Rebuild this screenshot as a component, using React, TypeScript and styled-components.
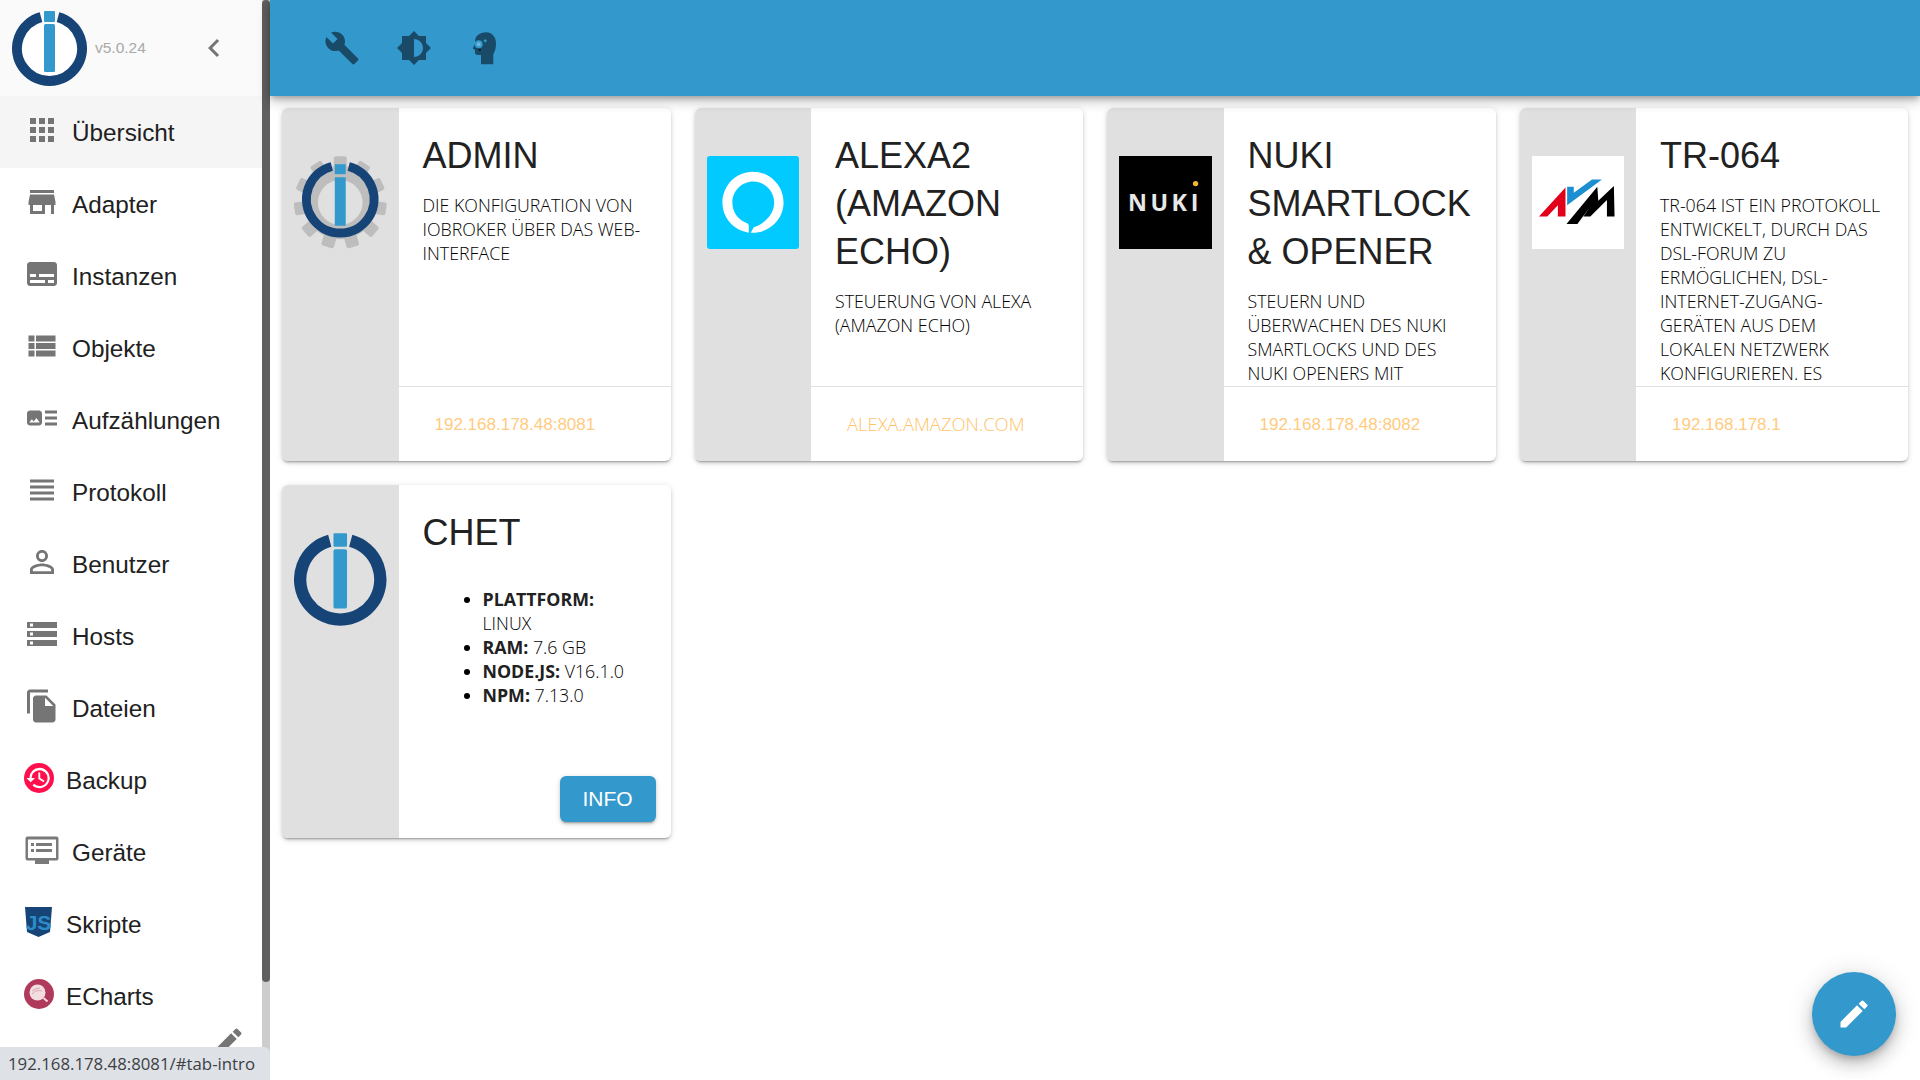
import React from 'react';
import styled, { createGlobalStyle } from 'styled-components';
import {
  MdApps, MdStore, MdSubtitles, MdViewList, MdArtTrack, MdViewHeadline, MdPersonOutline,
  MdStorage, MdFileCopy, MdEdit, MdChevronLeft, MdBuild, MdBrightnessMedium,
} from 'react-icons/md';

const GlobalStyle = createGlobalStyle`
  html, body { margin: 0; padding: 0; height: 100%; overflow: hidden; background: #fff; }
  * { box-sizing: border-box; }
`;

const SANS = `"Liberation Sans", Arial, sans-serif`;
const BODY = `"Open Sans", "Liberation Sans", sans-serif`;

const Page = styled.div`
  position: relative;
  width: 1920px;
  height: 1080px;
  display: flex;
  overflow: hidden;
  font-family: ${SANS};
  color: #212121;
`;

const Sidebar = styled.aside`
  width: 270px;
  height: 100%;
  display: flex;
  flex-shrink: 0;
  background: #fff;
`;

const SideColumn = styled.div`
  width: 262px;
  display: flex;
  flex-direction: column;
  overflow: hidden;
`;

const Scrollbar = styled.div`
  width: 8px;
  display: flex;
  flex-direction: column;
  background: #cdcdcd;
`;

const ScrollThumb = styled.div`
  height: 982px;
  background: #5f5f5f;
  border-radius: 4px;
`;

const Brand = styled.div`
  height: 96px;
  flex-shrink: 0;
  display: flex;
  align-items: center;
  padding-left: 12px;
  background: #fafafa;
`;

const Version = styled.span`
  font-size: 15.5px;
  color: #a9a9a9;
  margin-left: 8px;
  width: 101px;
`;

const Collapse = styled.span`
  display: flex;
  color: #757575;
`;

const MenuRow = styled.div<{ $active?: boolean }>`
  height: 72px;
  flex-shrink: 0;
  display: flex;
  align-items: center;
  padding-left: 24px;
  font-size: 24.3px;
  background: ${(p) => (p.$active ? '#f5f5f5' : 'transparent')};
`;

const MenuIcon = styled.span<{ $logo?: boolean }>`
  width: ${(p) => (p.$logo ? 30 : 36)}px;
  height: ${(p) => (p.$logo ? 30 : 36)}px;
  display: flex;
  align-items: center;
  justify-content: center;
  margin-bottom: 4px;
  color: #757575;
  flex-shrink: 0;
`;

const MenuLabel = styled.span`
  margin-left: 12px;
  padding-top: 2px;
`;

const EditRow = styled.div`
  display: flex;
  justify-content: flex-end;
  padding: 0 16px 0 0;
  margin-top: -8px;
  color: #757575;
`;

const StatusBar = styled.div`
  position: absolute;
  left: 0;
  bottom: 0;
  width: 270px;
  height: 33px;
  display: flex;
  align-items: center;
  padding-left: 8px;
  background: #dee1e6;
  border-top-right-radius: 6px;
  font-family: ${BODY};
  font-size: 16.8px;
  color: #3c4043;
  white-space: nowrap;
`;

const Main = styled.main`
  flex: 1;
  display: flex;
  flex-direction: column;
  min-width: 0;
`;

const Header = styled.header`
  height: 96px;
  flex-shrink: 0;
  display: flex;
  align-items: center;
  padding-left: 36px;
  background: #3399cc;
  box-shadow: 0 3px 6px -1px rgba(0, 0, 0, 0.25), 0 6px 12px rgba(0, 0, 0, 0.14), 0 1px 15px rgba(0, 0, 0, 0.12);
  position: relative;
  z-index: 1;
`;

const HeaderButton = styled.span`
  width: 72px;
  height: 60px;
  display: flex;
  align-items: center;
  justify-content: center;
  color: #194b69;
`;

const CardGrid = styled.section`
  display: grid;
  grid-template-columns: repeat(4, 1fr);
  grid-auto-rows: 353px;
  gap: 24px;
  padding: 12px;
`;

const Card = styled.article`
  display: flex;
  border-radius: 6px;
  overflow: hidden;
  background: #fff;
  box-shadow: 0 3px 1.5px -2px rgba(0, 0, 0, 0.2), 0 2px 3px rgba(0, 0, 0, 0.14), 0 1.5px 6px rgba(0, 0, 0, 0.12);
`;

const CardSide = styled.div`
  width: 116.5px;
  flex-shrink: 0;
  padding: 48px 12px 0;
  background: #e0e0e0;
`;

const CardLogo = styled.div<{ $bg?: string; $round?: number }>`
  width: 92.5px;
  height: 93px;
  display: flex;
  align-items: center;
  justify-content: center;
  background: ${(p) => p.$bg ?? 'transparent'};
  border-radius: ${(p) => p.$round ?? 0}px;
`;

const CardMain = styled.div`
  flex: 1;
  min-width: 0;
  display: flex;
  flex-direction: column;
`;

const CardBody = styled.div`
  flex: 1;
  min-height: 0;
  overflow: hidden;
  padding: 24px 24px 0;
`;

const CardTitle = styled.h2`
  margin: 0 0 12.5px;
  font-family: ${SANS};
  font-size: 36px;
  font-weight: 400;
  line-height: 48px;
  color: #212121;
  text-transform: uppercase;
`;

const CardText = styled.div`
  font-family: ${BODY};
  font-size: 17.8px;
  font-weight: 300;
  line-height: 24px;
  color: #000;
  text-transform: uppercase;
`;

const InfoList = styled.ul`
  margin: 30px 0 0;
  padding: 0 0 0 60px;
  font-family: ${BODY};
  font-size: 17.8px;
  font-weight: 300;
  line-height: 24px;
  color: #000;
  text-transform: uppercase;
  b { font-weight: 700; color: #212121; }
`;

const CardFooter = styled.div`
  height: 75px;
  flex-shrink: 0;
  display: flex;
  align-items: center;
  padding-left: 36px;
  border-top: 1.5px solid #e0e0e0;
`;

const CardLink = styled.span<{ $numeric?: boolean }>`
  font-family: ${(p) => (p.$numeric ? SANS : BODY)};
  font-size: ${(p) => (p.$numeric ? 17 : 18.4)}px;
  font-weight: ${(p) => (p.$numeric ? 400 : 300)};
  padding: ${(p) => (p.$numeric ? '2px 0 0' : '0 0 2px')};
  color: ${(p) => (p.$numeric ? '#ffcb80' : '#ffc266')};
  text-transform: uppercase;
`;

const ActionRow = styled.div`
  display: flex;
  justify-content: flex-end;
  padding: 0 15px 16px 0;
`;

const InfoButton = styled.button`
  width: 96px;
  height: 46px;
  border: 0;
  border-radius: 6px;
  background: #3399cc;
  color: #fff;
  font-family: ${SANS};
  font-size: 21px;
  box-shadow: 0 3px 1.5px -2px rgba(0, 0, 0, 0.2), 0 2px 3px rgba(0, 0, 0, 0.14), 0 1.5px 6px rgba(0, 0, 0, 0.12);
`;

const Fab = styled.button`
  position: absolute;
  left: 1812px;
  top: 972px;
  width: 84px;
  height: 84px;
  display: flex;
  align-items: center;
  justify-content: center;
  border: 0;
  border-radius: 50%;
  background: #3399cc;
  color: #fff;
  box-shadow: 0 4.5px 7.5px -1.5px rgba(0, 0, 0, 0.2), 0 9px 15px 1px rgba(0, 0, 0, 0.14), 0 3px 27px 1.5px rgba(0, 0, 0, 0.12);
`;

const NAVY = '#164477';
const BLUE = '#3399cc';

const IoLogo = ({ size, fill }: { size: number; fill?: string }) => (
  <svg width={size} height={size} viewBox="0 0 75 75">
    {fill && <circle cx="37.5" cy="37.5" r="30" fill={fill} />}
    <path d="M46 6.1 A32.5 32.5 0 1 1 29 6.1" fill="none" stroke={NAVY} strokeWidth="10" />
    <rect x="32" y="0" width="11" height="11" rx="1" fill={BLUE} />
    <rect x="32" y="13" width="11" height="48" rx="1.5" fill={BLUE} />
  </svg>
);

const teeth = [0, 1, 2, 3, 4, 5, 6, 7, 8, 9, 10];

const GearLogo = () => (
  <svg width="93" height="93" viewBox="0 0 93 93">
    {teeth.map((t) => (
      <rect key={t} x="40" y="0" width="13" height="14" rx="2" fill="#bdbdbd" transform={`rotate(${(t * 360) / 11} 46.5 46.5)`} />
    ))}
    <circle cx="46.5" cy="46.5" r="37" fill="#bdbdbd" />
    <circle cx="46.5" cy="46.5" r="22.5" fill="#e0e0e0" />
    <path d="M55 10.3 A34 34 0 1 1 38 10.3" fill="none" stroke={NAVY} strokeWidth="9" />
    <rect x="41" y="8" width="11" height="10" fill={BLUE} />
    <rect x="41" y="21" width="11" height="49" rx="1" fill={BLUE} />
  </svg>
);

const AlexaLogo = () => (
  <svg width="93" height="93" viewBox="0 0 93 93">
    <path
      d="M46 15.5 C29 15.5 15.5 29.5 15.5 46.5 C15.5 62 27 74.500 42 76.800 L42 70 C42 68.500 41 67.500 39.800 67 C31 64 25.500 56 25.500 46.500 C25.500 35 35 25.500 46.500 25.500 C58 25.500 67.500 35 67.500 46.500 C67.500 58 59 67 47 71.500 L44 76.900 C62 78 77 63.500 77 46.500 C77 29.500 63 15.500 46 15.500 Z"
      fill="#fff"
    />
  </svg>
);

const NukiLogo = () => (
  <svg width="93" height="93" viewBox="0 0 93 93">
    <text x="9" y="55" fill="#e8e8e8" fontFamily="'Open Sans', sans-serif" fontWeight="700" fontSize="23.4" letterSpacing="3.6">NUKI</text>
    <circle cx="77" cy="27.5" r="2.7" fill="#f2b632" />
  </svg>
);

const AvmLogo = () => (
  <svg width="93" height="93" viewBox="6 18 279 279">
    <path d="M27 200 L107 112 L107 200 L84 200 L84 166 L52 200 Z" fill="#e2001a" />
    <path d="M112 110 L132 110 L132 128 L187 88 L217 88 L112 166 Z" fill="#1c8fd0" />
    <path d="M110 222 L203 110 L206 152 L253 108 L255 200 L232 200 L232 150 L182 200 L161 200 L180 172 L143 222 Z" fill="#000" />
  </svg>
);

const BackupIcon = () => (
  <svg width="30" height="30" viewBox="0 0 30 30">
    <circle cx="15" cy="15" r="15" fill="#ff0f4b" />
    <g transform="translate(15 15) scale(1.2) translate(-15.5 -15)">
      <path
        d="M16 6.500a8.500 8.500 0 0 0-8.500 8.500H5l3.600 3.600L12.200 15H9.400a6.600 6.600 0 1 1 2 4.800l-1.300 1.400A8.500 8.500 0 1 0 16 6.500z"
        fill="#fff"
      />
      <path d="M15 10.500h1.500v4.600l3.600 2.200-.8 1.200-4.300-2.600z" fill="#fff" />
    </g>
  </svg>
);

const DeviceIcon = () => (
  <svg width="36" height="36" viewBox="0 0 36 36">
    <path
      d="M3.500 4.500h29a2 2 0 0 1 2 2v20a2 2 0 0 1-2 2h-29a2 2 0 0 1-2-2v-20a2 2 0 0 1 2-2zm.5 3v18.500h28v-18.500z"
      fill="#7a7a7a"
    />
    <rect x="11" y="28" width="14" height="4" fill="#7a7a7a" />
    <rect x="7" y="11" width="3" height="3" fill="#7a7a7a" />
    <rect x="12" y="11" width="16" height="3" fill="#7a7a7a" />
    <rect x="7" y="17" width="3" height="3" fill="#7a7a7a" />
    <rect x="12" y="17" width="16" height="3" fill="#7a7a7a" />
  </svg>
);

const JsIcon = () => (
  <svg width="30" height="30" viewBox="0 0 30 30">
    <path d="M1 0 H28 L26 25 L14.500 30 L3 25 Z" fill="#164477" />
    <text x="14.500" y="22.500" textAnchor="middle" fill="#2b8cc8" fontFamily="'Liberation Sans', sans-serif" fontWeight="700" fontSize="21">JS</text>
  </svg>
);

const EChartsIcon = () => (
  <svg width="30" height="30" viewBox="0 0 30 30">
    <circle cx="15" cy="15" r="15" fill="#b03a5b" />
    <circle cx="13.500" cy="13.500" r="8" fill="#f2dde2" />
    <path d="M8 15 q5 -5 10 -3 M8 12 q4 -3 8 -3" stroke="#d9a9b6" strokeWidth="1" fill="none" />
    <path d="M19.500 19 l4 3.500" stroke="#f2dde2" strokeWidth="2" />
  </svg>
);

const HeadIcon = () => (
  <svg width="36" height="36" viewBox="1 0 36 36">
    <path
      d="M19 2.300 C13 2.300 8 6 8 11 L8 14 L5.700 18.300 L8 20 L8 23 C8 24.500 9.500 25 13 25 L14 25 L14 34.300 L26.300 34.300 L26.300 24 C28 22 29 18 29 13.300 C29 7 25 2.300 19 2.300 Z"
      fill="#194b69"
    />
    <circle cx="11.700" cy="14.300" r="4" fill="#3399cc" />
    <circle cx="11.700" cy="14.300" r="2" fill="#6fb8dc" />
    <path d="M16.700 10 h1 v-1 h1 v1 h1 v1.400 h-1 v1 h-1 v-1 h-1 z" fill="#3399cc" />
    <circle cx="12.700" cy="20" r="1.300" fill="#0b2233" />
  </svg>
);

type MenuItem = { label: string; icon: React.ReactNode; logo?: boolean; active?: boolean };

const menu: MenuItem[] = [
  { label: 'Übersicht', icon: <MdApps size={36} />, active: true },
  { label: 'Adapter', icon: <MdStore size={36} /> },
  { label: 'Instanzen', icon: <MdSubtitles size={36} /> },
  { label: 'Objekte', icon: <MdViewList size={36} /> },
  { label: 'Aufzählungen', icon: <MdArtTrack size={36} /> },
  { label: 'Protokoll', icon: <MdViewHeadline size={36} /> },
  { label: 'Benutzer', icon: <MdPersonOutline size={36} /> },
  { label: 'Hosts', icon: <MdStorage size={36} /> },
  { label: 'Dateien', icon: <MdFileCopy size={36} /> },
  { label: 'Backup', icon: <BackupIcon />, logo: true },
  { label: 'Geräte', icon: <DeviceIcon /> },
  { label: 'Skripte', icon: <JsIcon />, logo: true },
  { label: 'ECharts', icon: <EChartsIcon />, logo: true },
];

type Adapter = { title: string; text: string; link: string; numeric?: boolean; logo: React.ReactNode };

const adapters: Adapter[] = [
  {
    title: 'Admin',
    text: 'Die Konfiguration von ioBroker über das Web-Interface',
    link: '192.168.178.48:8081',
    numeric: true,
    logo: <CardLogo><GearLogo /></CardLogo>,
  },
  {
    title: 'Alexa2 (Amazon Echo)',
    text: 'Steuerung von Alexa (Amazon Echo)',
    link: 'alexa.amazon.com',
    logo: <CardLogo $bg="#00caff" $round={3}><AlexaLogo /></CardLogo>,
  },
  {
    title: 'Nuki Smartlock & Opener',
    text: 'Steuern und Überwachen des Nuki Smartlocks und des Nuki Openers mit',
    link: '192.168.178.48:8082',
    numeric: true,
    logo: <CardLogo $bg="#000"><NukiLogo /></CardLogo>,
  },
  {
    title: 'TR-064',
    text: 'TR-064 ist ein Protokoll entwickelt, durch das DSL-Forum zu ermöglichen, DSL-Internet-Zugang-Geräten aus dem lokalen Netzwerk konfigurieren. Es',
    link: '192.168.178.1',
    numeric: true,
    logo: <CardLogo $bg="#fff"><AvmLogo /></CardLogo>,
  },
];

export default function App() {
  return (
    <Page>
      <GlobalStyle />
      <Sidebar>
        <SideColumn>
          <Brand>
            <IoLogo size={75} fill="#fff" />
            <Version>v5.0.24</Version>
            <Collapse><MdChevronLeft size={36} /></Collapse>
          </Brand>
          {menu.map((m) => (
            <MenuRow key={m.label} $active={m.active}>
              <MenuIcon $logo={m.logo}>{m.icon}</MenuIcon>
              <MenuLabel>{m.label}</MenuLabel>
            </MenuRow>
          ))}
          <EditRow><MdEdit size={36} /></EditRow>
        </SideColumn>
        <Scrollbar><ScrollThumb /></Scrollbar>
      </Sidebar>
      <Main>
        <Header>
          <HeaderButton><MdBuild size={36} /></HeaderButton>
          <HeaderButton><MdBrightnessMedium size={36} /></HeaderButton>
          <HeaderButton><HeadIcon /></HeaderButton>
        </Header>
        <CardGrid>
          {adapters.map((a) => (
            <Card key={a.title}>
              <CardSide>{a.logo}</CardSide>
              <CardMain>
                <CardBody>
                  <CardTitle>{a.title}</CardTitle>
                  <CardText>{a.text}</CardText>
                </CardBody>
                <CardFooter><CardLink $numeric={a.numeric}>{a.link}</CardLink></CardFooter>
              </CardMain>
            </Card>
          ))}
          <Card>
            <CardSide><CardLogo><IoLogo size={93} /></CardLogo></CardSide>
            <CardMain>
              <CardBody>
                <CardTitle>Chet</CardTitle>
                <InfoList>
                  <li><b>Plattform:</b> Linux</li>
                  <li><b>RAM:</b> 7.6 GB</li>
                  <li><b>Node.js:</b> v16.1.0</li>
                  <li><b>NPM:</b> 7.13.0</li>
                </InfoList>
              </CardBody>
              <ActionRow><InfoButton>INFO</InfoButton></ActionRow>
            </CardMain>
          </Card>
        </CardGrid>
      </Main>
      <Fab><MdEdit size={36} /></Fab>
      <StatusBar>192.168.178.48:8081/#tab-intro</StatusBar>
    </Page>
  );
}
